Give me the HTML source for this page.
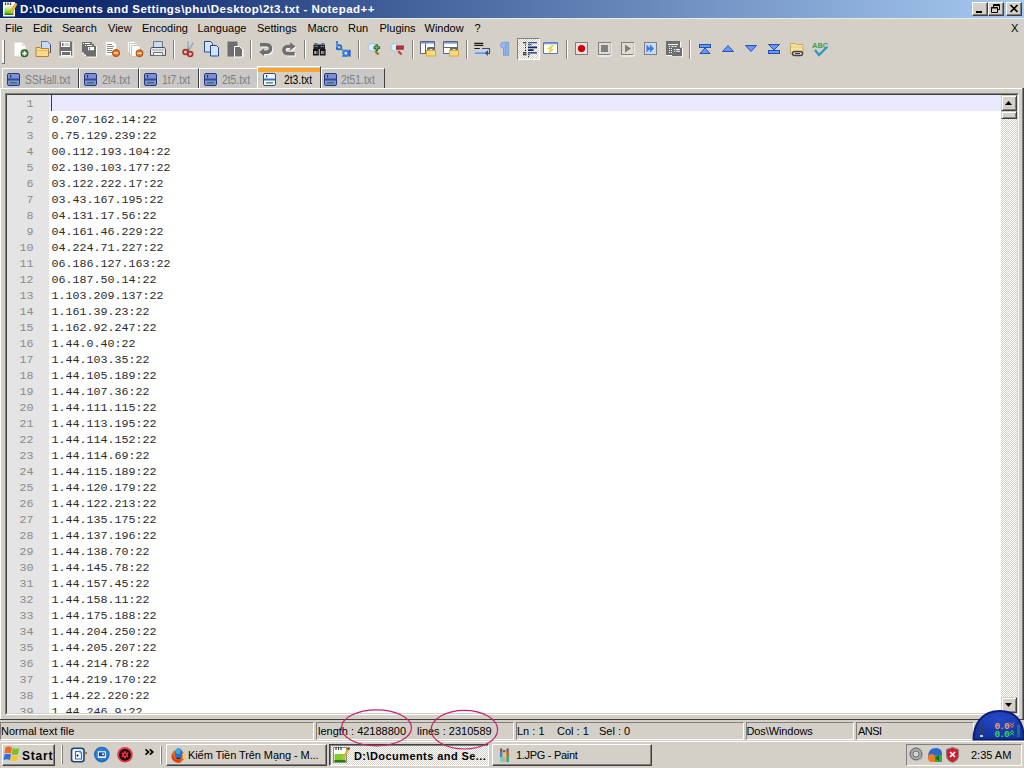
<!DOCTYPE html>
<html><head><meta charset="utf-8">
<style>
*{box-sizing:border-box;margin:0;padding:0}
html,body{width:1024px;height:768px;overflow:hidden;background:#D4D0C8;font-family:"Liberation Sans",sans-serif;font-size:11px;color:#000}
.a{position:absolute}
svg{position:absolute;overflow:visible}
#title{left:0;top:0;width:1024px;height:18px;background:linear-gradient(to right,#0A246A 0%,#0A246A 5%,#A6CAF0 100%)}
#title .t{left:20px;top:2px;color:#fff;font-weight:bold;font-size:11.5px;letter-spacing:0.44px;line-height:14px;white-space:nowrap}
.wb{top:2px;width:16px;height:14px;background:#D4D0C8;border-top:1px solid #fff;border-left:1px solid #fff;border-right:1px solid #404040;border-bottom:1px solid #404040;box-shadow:inset -1px -1px 0 #808080}
#menu{left:0;top:18px;width:1024px;height:20px}
#menu span{position:absolute;top:4px;line-height:13px;white-space:nowrap}
#tb{left:0;top:38px;width:1024px;height:28px}
.sep{position:absolute;top:40px;width:2px;height:19px;border-left:1px solid #808080;border-right:1px solid #fff}
#tabs{left:0;top:66px;width:1024px;height:26px}
.tab{position:absolute;top:68px;height:20px;background:#C9C8C6;border-top:1px solid #fff;border-left:1px solid #fff;border-right:1px solid #404040;color:#808080;white-space:nowrap}
.tab .tt{position:absolute;left:22px;top:4px;line-height:14px;font-size:12px;transform:scaleX(0.86);transform-origin:0 0}
.mono{font-family:"Liberation Mono",monospace;font-size:11.67px;line-height:16px;white-space:pre}
#status span{position:absolute;top:6px;line-height:13px;white-space:nowrap}
.pn{position:absolute;top:3px;height:18px;border-top:1px solid #808080;border-left:1px solid #808080;border-right:1px solid #fff;border-bottom:1px solid #fff}
.tbtn{position:absolute;top:4px;height:22px;border-top:1px solid #fff;border-left:1px solid #fff;border-right:1px solid #404040;border-bottom:1px solid #404040;box-shadow:inset -1px -1px 0 #808080}
.tbtn span{position:absolute;top:4px;line-height:13px;white-space:nowrap}
</style></head><body>
<div id="title" class="a">
  <div class="t a">D:\Documents and Settings\phu\Desktop\2t3.txt - Notepad++</div>
  <div class="wb a" style="left:972px"></div>
  <div class="wb a" style="left:988px"></div>
  <div class="wb a" style="left:1006px"></div>
</div>
<svg style="left:976px;top:11px" width="6" height="2"><rect width="6" height="2" fill="#000"/></svg>
<svg style="left:991px;top:4px" width="9" height="9" viewBox="0 0 9 9"><path d="M2.5 0.5h6v5h-6z M2.5 1.5h6" stroke="#000" fill="none"/><path d="M0.5 3.5h6v5h-6z" fill="#D4D0C8" stroke="#000"/><path d="M0 4h7" stroke="#000" stroke-width="1"/></svg>
<svg style="left:1010px;top:5px" width="8" height="7" viewBox="0 0 8 7"><path d="M0.5 0l7 7M7.5 0l-7 7" stroke="#000" stroke-width="1.6"/></svg>
<div class="a" style="left:0;top:18px;width:1024px;height:1px;background:#E8ECEC"></div>
<div id="menu" class="a">
  <span style="left:5px">File</span>
  <span style="left:33px">Edit</span>
  <span style="left:62px">Search</span>
  <span style="left:108px">View</span>
  <span style="left:142px">Encoding</span>
  <span style="left:197.5px">Language</span>
  <span style="left:257px">Settings</span>
  <span style="left:307.5px">Macro</span>
  <span style="left:348px">Run</span>
  <span style="left:379.5px">Plugins</span>
  <span style="left:424.5px">Window</span>
  <span style="left:474.5px">?</span>
  <span style="left:1011px">X</span>
</div>
<div id="tb" class="a">
  <div class="a" style="left:2px;top:2px;width:3px;height:24px;background:#F8F8F4;border-right:1px solid #707070;border-bottom:1px solid #707070"></div>
</div>
<svg style="left:13px;top:41px" width="16" height="16" viewBox="0 0 16 16">
<path d="M1.5 1.5h8l3 3v10.5h-11z" fill="#fff" stroke="#E8E4E0"/>
<path d="M9.5 1.5v3h3" fill="#F0F0F0" stroke="#D8D4D0"/>
<circle cx="11.5" cy="12.3" r="3.4" fill="#4A9A40" stroke="#2A5A28" stroke-width="1.1"/>
<path d="M11.5 10.2v4.3M9.4 12.5h4.3" stroke="#fff" stroke-width="1.3"/>
</svg><svg style="left:36px;top:41px" width="16" height="16" viewBox="0 0 16 16">
<path d="M5.5 0.5h6l3 3v8h-9z" fill="#C8DCF8" stroke="#5A78A8"/>
<path d="M14.5 3.5v8" stroke="#34507E"/>
<path d="M0 6.5h4l1 1h7.5v8h-12.5z" fill="#F8DA88" stroke="#B88038"/>
<path d="M1 9.5h11" stroke="#E8B860"/>
</svg><svg style="left:58px;top:41px" width="16" height="16" viewBox="0 0 16 16">
<path d="M1.5 0.5h13v14h-13z" fill="#6E6E6E"/>
<rect x="3" y="1" width="9" height="5" fill="#fff"/>
<rect x="4" y="2" width="1.5" height="3" fill="#6E6E6E"/>
<rect x="6.5" y="2" width="5" height="3" fill="#D0D0D0"/>
<rect x="3" y="10" width="10" height="5" fill="#fff"/>
<rect x="4" y="11" width="8" height="3" fill="#6E6E6E"/>
<path d="M15 1v15h-14" stroke="#fff" fill="none"/>
</svg><svg style="left:81px;top:41px" width="16" height="16" viewBox="0 0 16 16">
<path d="M15.5 5v11h-10M1.5 11.5v1h2v2h2" stroke="#fff" fill="none"/>
<path d="M1 1h10v2h2v2h2v10.5h-10v-2h-2v-2h-2z" fill="#6E6E6E"/>
<path d="M2 2.5h1M4 2.5h5M4 4.5h1M6 4.5h5" stroke="#fff"/>
<rect x="7" y="6" width="6" height="3.2" fill="#fff"/><rect x="8" y="6.6" width="1.2" height="2" fill="#6E6E6E"/>
</svg><svg style="left:104px;top:41px" width="16" height="16" viewBox="0 0 16 16">
<path d="M1.5 0.5h8l3 3v11h-11z" fill="#fff" stroke="#D8D4D0"/>
<path d="M3 3.5h5M3 5.5h7M3 7.5h6M3 9.5h5M3 11.5h5" stroke="#8A8A8A" stroke-width="1"/>
<circle cx="12" cy="12" r="3.6" fill="#E07020" stroke="#B05010"/>
<path d="M9.8 12h4.4" stroke="#FFE8A0" stroke-width="1.6"/>
</svg><svg style="left:127px;top:41px" width="16" height="16" viewBox="0 0 16 16">
<path d="M0.5 0.5h7l2 2v9h-9z" fill="#fff" stroke="#D8D4D0"/>
<path d="M2.5 2.5h7l2 2v9h-9z" fill="#fff" stroke="#C8C4C0"/>
<path d="M4.5 4.5h7l2 2v9h-9z" fill="#fff" stroke="#C8C4C0"/>
<circle cx="12.5" cy="12.3" r="3.5" fill="#E07020" stroke="#B05010"/>
<path d="M10.4 12.3h4.2" stroke="#FFE8A0" stroke-width="1.6"/>
</svg><svg style="left:150px;top:41px" width="16" height="16" viewBox="0 0 16 16">
<path d="M3.5 0.5h9v6h-9z" fill="#C8DCF8" stroke="#707880"/>
<path d="M1.5 6.5h13l1 2v6h-15v-6z" fill="#E8E8E8" stroke="#505458"/>
<path d="M2 9h12" stroke="#A0A4A8"/>
<path d="M3.5 11.5h9v3h-9z" fill="#F4F4F4" stroke="#707478"/>
</svg><svg style="left:181px;top:41px" width="16" height="16" viewBox="0 0 16 16">
<path d="M7 0.5v9" stroke="#9AA8B8" stroke-width="1.5"/>
<path d="M12.5 1.5l-5 8" stroke="#9AA8B8" stroke-width="1.5"/>
<path d="M7 7.5l1 3" stroke="#3A8A5A" stroke-width="1"/>
<circle cx="4.5" cy="11" r="2.4" fill="none" stroke="#B03030" stroke-width="1.8"/>
<circle cx="9.2" cy="13" r="2.4" fill="none" stroke="#B03030" stroke-width="1.8"/>
</svg><svg style="left:204px;top:41px" width="16" height="16" viewBox="0 0 16 16">
<path d="M0.5 0.5h6l2 2v8.5h-8z" fill="#D0E4FC" stroke="#2E4A80"/>
<path d="M6.5 4.5h6l2 2v8.5h-8z" fill="#D0E4FC" stroke="#2E4A80"/>
</svg><svg style="left:227px;top:41px" width="16" height="16" viewBox="0 0 16 16">
<path d="M0.5 0.5h10v15h-10z" fill="#6E6E6E"/>
<path d="M7.5 5.5h5l3 3v7.5h-8z" fill="#6E6E6E" stroke="#fff"/>
<path d="M16 8v8" stroke="#fff"/>
</svg><svg style="left:258px;top:41px" width="16" height="16" viewBox="0 0 16 16"><g transform="translate(1,1)"><path d="M2 3.7H8.8A3.8 3.8 0 0 1 8.8 11.3H5.5" stroke-width="3.4" fill="none" stroke="#fff"/><path d="M6.2 7.3L1.2 11.3L6.2 15.3z" fill="#fff"/></g><path d="M2 3.7H8.8A3.8 3.8 0 0 1 8.8 11.3H5.5" stroke-width="3.4" fill="none" stroke="#6E6E6E"/><path d="M6.2 7.3L1.2 11.3L6.2 15.3z" fill="#6E6E6E"/></svg><svg style="left:281px;top:41px" width="16" height="16" viewBox="0 0 16 16"><g transform="translate(1,1)"><path d="M9.5 5.4H6.6A3.7 3.7 0 0 0 6.6 12.8H13.7" stroke-width="3.4" fill="none" stroke="#fff"/><path d="M9.2 1.3L14.5 5.4L9.2 9.5z" fill="#fff"/></g><path d="M9.5 5.4H6.6A3.7 3.7 0 0 0 6.6 12.8H13.7" stroke-width="3.4" fill="none" stroke="#6E6E6E"/><path d="M9.2 1.3L14.5 5.4L9.2 9.5z" fill="#6E6E6E"/></svg><svg style="left:312px;top:41px" width="16" height="16" viewBox="0 0 16 16">
<path d="M1 8h5.8v6.5h-5.8z M7.8 8h5.8v6.5h-5.8z" fill="#151515"/>
<path d="M1.5 3.5h11.5v4.5h-11.5z" fill="#202028"/>
<path d="M2.5 2.5h3M9.3 2.5h3" stroke="#5A6A8A" stroke-width="1"/>
<path d="M2.5 5.5h3.5M8.5 5.5h3.5" stroke="#6A7A9A" stroke-width="1"/>
<rect x="2.3" y="10" width="1.6" height="3" fill="#B8B8B8"/><rect x="4.4" y="10" width="1.2" height="3" fill="#888"/>
<rect x="9.1" y="10" width="1.6" height="3" fill="#B8B8B8"/><rect x="11.2" y="10" width="1.2" height="3" fill="#888"/>
</svg><svg style="left:335px;top:41px" width="16" height="16" viewBox="0 0 16 16">
<path d="M2 0.3v8.5" stroke="#2A64C8" stroke-width="2"/>
<circle cx="4.3" cy="6.3" r="2.1" fill="none" stroke="#2A64C8" stroke-width="1.7"/>
<path d="M2 1.5v5" stroke="#90D4FA" stroke-width="0.8"/>
<path d="M6 7.5l2.5 2.5" stroke="#30A050" stroke-width="1.7"/>
<circle cx="11" cy="12.2" r="3.7" fill="#3C7CE4"/>
<path d="M14.6 8.8v6.8" stroke="#2A5CC0" stroke-width="2"/>
<circle cx="10.8" cy="12.2" r="1.4" fill="#C0E4FF"/>
<path d="M7.5 15.5l1.5 -1" stroke="#2A5CC0" stroke-width="1.5"/>
</svg><svg style="left:366px;top:41px" width="16" height="16" viewBox="0 0 16 16">
<circle cx="5.8" cy="6.2" r="3.8" fill="#DCEEFC" stroke="#A8C8E8" stroke-width="1.2"/>
<path d="M9.3 10.3l3.2 3.2" stroke="#8A7430" stroke-width="2.2"/>
<path d="M10.8 3.3v6.6M7.5 6.6h6.6" stroke="#2A6A2A" stroke-width="2.6"/>
<path d="M10.8 4.5v4.2M8.7 6.6h4.2" stroke="#6AC060" stroke-width="1"/>
</svg><svg style="left:389px;top:41px" width="16" height="16" viewBox="0 0 16 16">
<circle cx="5.8" cy="6.2" r="3.8" fill="#DCEEFC" stroke="#A8C8E8" stroke-width="1.2"/>
<path d="M9.3 10.3l3.2 3.2" stroke="#A84840" stroke-width="2.2"/>
<rect x="7.5" y="5" width="6.8" height="3.2" fill="#D03040" stroke="#8A1A20" stroke-width="0.8"/>
</svg><svg style="left:420px;top:41px" width="16" height="16" viewBox="0 0 16 16">
<path d="M0.5 0.5h14v12h-14z" fill="#fff" stroke="#56648A"/>
<path d="M1 1.8h13" stroke="#7A94CC" stroke-width="1.6"/>
<path d="M5.5 2.5v10" stroke="#56648A"/>
<path d="M7 10V7.5a1.5 1.5 0 0 1 1.5 -1.5h5a1.5 1.5 0 0 1 1.5 1.5V10z" fill="#686868"/>
<path d="M9 10a2 2 0 0 1 4 0z" fill="#fff"/>
<rect x="6.5" y="9.5" width="9" height="5.5" fill="#F8DC78" stroke="#D8A838"/>
</svg><svg style="left:443px;top:41px" width="16" height="16" viewBox="0 0 16 16">
<path d="M0.5 0.5h14v12h-14z" fill="#fff" stroke="#56648A"/>
<path d="M1 1.8h13" stroke="#7A94CC" stroke-width="1.6"/>
<path d="M1 6.5h13" stroke="#56648A"/>
<path d="M7 10V7.5a1.5 1.5 0 0 1 1.5 -1.5h5a1.5 1.5 0 0 1 1.5 1.5V10z" fill="#686868"/>
<path d="M9 10a2 2 0 0 1 4 0z" fill="#fff"/>
<rect x="6.5" y="9.5" width="9" height="5.5" fill="#F8DC78" stroke="#D8A838"/>
</svg><svg style="left:474px;top:41px" width="16" height="16" viewBox="0 0 16 16">
<path d="M0.3 2.3h9M0.3 4.4h9M0.3 7.5h5.5" stroke="#1A1A1A" stroke-width="1.2"/>
<rect x="0.3" y="10" width="13" height="4.2" fill="#BCD4F4"/>
<path d="M1 12.1h11" stroke="#5E8CD0" stroke-width="1.4"/>
<path d="M8 7.5h7.5v5h-3" stroke="#34507E" fill="none" stroke-width="1.1"/>
<path d="M14 9.3l-3.2 2.8l3.2 2.8z" fill="#34507E"/>
</svg><svg style="left:497px;top:41px" width="16" height="16" viewBox="0 0 16 16">
<path d="M6.5 1.3h5.2v13.2h-1.9v-11.4h-1.4v11.4h-1.9v-7.3a2.9 2.9 0 0 1 0 -5.9z" fill="#94BCF2" stroke="#6A94DC" stroke-width="0.8"/>
</svg><div class="a" style="left:517px;top:38px;width:23px;height:22px;border-top:1px solid #808080;border-left:1px solid #808080;border-right:1px solid #fff;border-bottom:1px solid #fff;background-color:#fff;background-image:conic-gradient(#D4D0C8 25%,transparent 0 50%,#D4D0C8 0 75%,transparent 0);background-size:2px 2px"></div><svg style="left:523px;top:42px" width="16" height="16" viewBox="0 0 16 16">
<path d="M0 0.8h3.5M0 10.9h3.5M0 12.8h3.5" stroke="#101010" stroke-width="1.1"/>
<path d="M2.5 2.5v1.2M2.5 5v1.2M2.5 7.8v1.2" stroke="#101010"/>
<path d="M5 0.8h9M5 2.8h3.6M5 10.9h9M5 12.8h1.6" stroke="#102468" stroke-width="1.1"/>
<path d="M5 5.4h9M5 8.2h5.6" stroke="#102468" stroke-width="1.8"/>
<path d="M5.5 14v1.2" stroke="#101010"/>
</svg><svg style="left:543px;top:41px" width="16" height="16" viewBox="0 0 16 16">
<path d="M0.5 1.5h14v11h-14z" fill="#FFFFF0" stroke="#5A78B8"/>
<path d="M1 2.5h13" stroke="#7A9AD8" stroke-width="1.6"/>
<path d="M9 4l-5 4h3l-2 5l6 -5h-3l3 -4z" fill="#F0D040"/>
</svg><svg style="left:573px;top:41px" width="16" height="16" viewBox="0 0 16 16">
<rect x="2.5" y="1.5" width="12" height="12" fill="#E8E0E0" stroke="#808080"/>
<circle cx="8.5" cy="7.5" r="3.6" fill="#D00000"/>
</svg><svg style="left:596px;top:41px" width="16" height="16" viewBox="0 0 16 16">
<rect x="2.5" y="1.5" width="12" height="12" fill="#E0DCD4" stroke="#808080"/>
<path d="M15 2v13h-13" stroke="#fff" fill="none"/>
<rect x="5" y="4" width="7" height="7" fill="#808080"/>
</svg><svg style="left:619px;top:41px" width="16" height="16" viewBox="0 0 16 16">
<rect x="2.5" y="1.5" width="12" height="12" fill="#E0DCD4" stroke="#808080"/>
<path d="M15 2v13h-13" stroke="#fff" fill="none"/>
<path d="M6 3.5l6 4l-6 4z" fill="#808080"/>
</svg><svg style="left:642px;top:41px" width="16" height="16" viewBox="0 0 16 16">
<rect x="2.5" y="1.5" width="12" height="12" fill="#C8DCF4" stroke="#808080"/>
<path d="M4.5 3.5l4 4l-4 4z M8 3.5l4 4l-4 4z" fill="#3A78E0"/>
</svg><svg style="left:665px;top:41px" width="16" height="16" viewBox="0 0 16 16">
<path d="M15.5 1v6M17.5 7v9.5M7 15.5h11M1.5 14.5h6" stroke="#fff" stroke-opacity="0.9"/>
<rect x="1" y="0" width="14" height="14" fill="#6E6E6E"/>
<path d="M3 3.5h10" stroke="#fff"/>
<path d="M4 5.5h1M6.5 5.5h2M9.5 5.5h2M4 7.5h1M6 7.5h1M4 9.5h1M6 9.5h1M4 11.5h1M6 11.5h1" stroke="#fff"/>
<rect x="7" y="6.7" width="10" height="8.5" fill="#6E6E6E"/>
<path d="M9 8.5h1.2M11.2 8.5h3.5M9 10.2h1.2M11.2 10.2h3.8" stroke="#fff" stroke-width="1.1"/>
</svg><svg style="left:697px;top:41px" width="16" height="16" viewBox="0 0 16 16">
<rect x="2.5" y="3.5" width="11" height="3" fill="#6A9AF0" stroke="#2050B8"/>
<path d="M8 7l5 5.5h-10z" fill="#6A9AF0" stroke="#2050B8"/>
</svg><svg style="left:720px;top:41px" width="16" height="16" viewBox="0 0 16 16">
<path d="M8 4.5l5.5 6h-11z" fill="#6A9AF0" stroke="#2050B8"/>
</svg><svg style="left:743px;top:41px" width="16" height="16" viewBox="0 0 16 16">
<path d="M2.5 4.5h11l-5.5 6z" fill="#6A9AF0" stroke="#2050B8"/>
</svg><svg style="left:766px;top:41px" width="16" height="16" viewBox="0 0 16 16">
<path d="M2.5 3.5h11l-5.5 5.5z" fill="#6A9AF0" stroke="#2050B8"/>
<rect x="2.5" y="9.5" width="11" height="3" fill="#6A9AF0" stroke="#2050B8"/>
</svg><svg style="left:789px;top:41px" width="16" height="16" viewBox="0 0 16 16">
<path d="M1.5 2.5h5l1 1h6.5v9h-12.5z" fill="#F8E4A0" stroke="#C8A860"/>
<path d="M2 6h12" stroke="#E8C878"/>
<rect x="3.5" y="10.5" width="10" height="4" rx="2" fill="#E0E0E0" stroke="#404040" stroke-width="1.4"/>
<path d="M6 12.5h5" stroke="#404040" stroke-width="1.2"/>
</svg><svg style="left:812px;top:41px" width="16" height="16" viewBox="0 0 16 16">
<text x="0" y="6.5" font-family="Liberation Sans" font-weight="bold" font-size="7.5" fill="#4A9A4A">ABC</text>
<path d="M3 9l4 5l8 -8" stroke="#2A98B8" stroke-width="2.2" fill="none"/>
</svg><div class="sep" style="left:173px"></div><div class="sep" style="left:250px"></div><div class="sep" style="left:304px"></div><div class="sep" style="left:358px"></div><div class="sep" style="left:412px"></div><div class="sep" style="left:466px"></div><div class="sep" style="left:566px"></div><div class="sep" style="left:689px"></div>
<div id="tabs">
  <div class="tab" style="left:2px;width:77px"><span class="tt" style="left:22px">SSHall.txt</span></div>
  <div class="tab" style="left:79px;width:60px"><span class="tt" style="left:22px">2t4.txt</span></div>
  <div class="tab" style="left:139px;width:60px"><span class="tt" style="left:22px">1t7.txt</span></div>
  <div class="tab" style="left:199px;width:58px;border-right:0"><span class="tt" style="left:22px">2t5.txt</span></div>
  <div class="tab" style="left:257px;width:64px;top:66px;height:22px;background:#D4D0C8;color:#000"><div class="a" style="left:0;top:1px;width:62px;height:4px;background:#F6A631"></div><span class="tt" style="left:26px;top:6px">2t3.txt</span></div>
  <div class="tab" style="left:321px;width:64px"><span class="tt" style="left:19px">2t51.txt</span></div>
</div>
<svg style="left:7px;top:73px" width="13" height="13" viewBox="0 0 13 13"><rect x="0.5" y="0.5" width="12" height="12" rx="1.5" fill="#8090D0" stroke="#26347A"/>
<rect x="3" y="2" width="1.2" height="2.5" fill="#1E2A6A"/>
<rect x="1" y="5.5" width="11" height="2" fill="#2E4AA0"/>
<rect x="3" y="9" width="7" height="1.6" fill="#3A7A6A"/></svg><svg style="left:84px;top:73px" width="13" height="13" viewBox="0 0 13 13"><rect x="0.5" y="0.5" width="12" height="12" rx="1.5" fill="#8090D0" stroke="#26347A"/>
<rect x="3" y="2" width="1.2" height="2.5" fill="#1E2A6A"/>
<rect x="1" y="5.5" width="11" height="2" fill="#2E4AA0"/>
<rect x="3" y="9" width="7" height="1.6" fill="#3A7A6A"/></svg><svg style="left:144px;top:73px" width="13" height="13" viewBox="0 0 13 13"><rect x="0.5" y="0.5" width="12" height="12" rx="1.5" fill="#8090D0" stroke="#26347A"/>
<rect x="3" y="2" width="1.2" height="2.5" fill="#1E2A6A"/>
<rect x="1" y="5.5" width="11" height="2" fill="#2E4AA0"/>
<rect x="3" y="9" width="7" height="1.6" fill="#3A7A6A"/></svg><svg style="left:204px;top:73px" width="13" height="13" viewBox="0 0 13 13"><rect x="0.5" y="0.5" width="12" height="12" rx="1.5" fill="#8090D0" stroke="#26347A"/>
<rect x="3" y="2" width="1.2" height="2.5" fill="#1E2A6A"/>
<rect x="1" y="5.5" width="11" height="2" fill="#2E4AA0"/>
<rect x="3" y="9" width="7" height="1.6" fill="#3A7A6A"/></svg><svg style="left:324px;top:73px" width="13" height="13" viewBox="0 0 13 13"><rect x="0.5" y="0.5" width="12" height="12" rx="1.5" fill="#8090D0" stroke="#26347A"/>
<rect x="3" y="2" width="1.2" height="2.5" fill="#1E2A6A"/>
<rect x="1" y="5.5" width="11" height="2" fill="#2E4AA0"/>
<rect x="3" y="9" width="7" height="1.6" fill="#3A7A6A"/></svg><svg style="left:263px;top:73px" width="13" height="13" viewBox="0 0 13 13"><rect x="0.5" y="0.5" width="12" height="12" rx="1.5" fill="#F4F8FF" stroke="#38477A"/>
<rect x="3" y="2" width="1.2" height="2.5" fill="#2A3A6A"/>
<rect x="1" y="5.5" width="11" height="2" fill="#3E6CC0"/>
<rect x="3" y="9" width="7" height="1.6" fill="#5AA05A"/></svg><svg style="left:2px;top:1px" width="16" height="16" viewBox="0 0 16 16">
<defs><linearGradient id="ag" x1="0" y1="0" x2="0" y2="1"><stop offset="0" stop-color="#F0F8E0"/><stop offset="0.45" stop-color="#A8E848"/><stop offset="0.8" stop-color="#60B820"/><stop offset="1" stop-color="#185A08"/></linearGradient></defs>
<rect x="1" y="1" width="12" height="14.5" fill="#fff"/>
<rect x="2.5" y="5" width="9" height="9" fill="url(#ag)"/>
<path d="M3.5 1.5v2.5M6 1.5v2.5M8.5 1.5v2.5" stroke="#383838" stroke-width="1.3"/>
<path d="M14.3 2.5l-5.5 9.5" stroke="#C89020" stroke-width="2.8"/>
<path d="M14.3 2.5l-5.5 9.5" stroke="#F8D060" stroke-width="1.2"/>
</svg>
<div class="a" style="left:0;top:88px;width:1022px;height:1px;background:#fff"></div><div class="a" style="left:0;top:88px;width:1px;height:631px;background:#fff"></div>
<!-- editor frame -->
<div class="a" style="left:5px;top:93px;width:1014px;height:622px;border-top:1px solid #808080;border-left:1px solid #808080;border-right:1px solid #fff;border-bottom:1px solid #fff">
 <div class="a" style="left:0;top:0;width:1012px;height:620px;border-top:1px solid #404040;border-left:1px solid #404040;border-right:1px solid #D4D0C8;border-bottom:1px solid #D4D0C8;background:#fff;overflow:hidden">
  <div class="a" style="left:0;top:0;width:42px;height:618px;background:#E4E4E4"></div>
  <div class="a" style="left:42px;top:0;width:952px;height:16px;background:#E8E8FF"></div>
  <div class="a mono" style="left:0;top:1px;width:26.5px;text-align:right;color:#8a8a8a">1
2
3
4
5
6
7
8
9
10
11
12
13
14
15
16
17
18
19
20
21
22
23
24
25
26
27
28
29
30
31
32
33
34
35
36
37
38
39</div>
  <div class="a mono" style="left:44.5px;top:1px;color:#2a2a2a">
0.207.162.14:22
0.75.129.239:22
00.112.193.104:22
02.130.103.177:22
03.122.222.17:22
03.43.167.195:22
04.131.17.56:22
04.161.46.229:22
04.224.71.227:22
06.186.127.163:22
06.187.50.14:22
1.103.209.137:22
1.161.39.23:22
1.162.92.247:22
1.44.0.40:22
1.44.103.35:22
1.44.105.189:22
1.44.107.36:22
1.44.111.115:22
1.44.113.195:22
1.44.114.152:22
1.44.114.69:22
1.44.115.189:22
1.44.120.179:22
1.44.122.213:22
1.44.135.175:22
1.44.137.196:22
1.44.138.70:22
1.44.145.78:22
1.44.157.45:22
1.44.158.11:22
1.44.175.188:22
1.44.204.250:22
1.44.205.207:22
1.44.214.78:22
1.44.219.170:22
1.44.22.220:22
1.44.246.9:22</div>
  <div class="a" style="left:44px;top:0;width:1px;height:16px;background:#5020A0"></div>
  <!-- scrollbar -->
  <div class="a" style="left:994px;top:0;width:16px;height:618px;background-color:#fff;background-image:conic-gradient(#D4D0C8 25%,transparent 0 50%,#D4D0C8 0 75%,transparent 0);background-size:2px 2px"></div>
  <div class="a" style="left:994px;top:0;width:16px;height:16px;background:#D4D0C8;border-top:1px solid #D4D0C8;border-left:1px solid #D4D0C8;border-right:1px solid #404040;border-bottom:1px solid #404040;box-shadow:inset 1px 1px 0 #fff,inset -1px -1px 0 #808080"></div>
  <div class="a" style="left:994px;top:16px;width:16px;height:8px;background:#D4D0C8;border-top:1px solid #D4D0C8;border-left:1px solid #D4D0C8;border-right:1px solid #404040;border-bottom:1px solid #404040;box-shadow:inset 1px 1px 0 #fff,inset -1px -1px 0 #808080"></div>
  <div class="a" style="left:994px;top:602px;width:16px;height:16px;background:#D4D0C8;border-top:1px solid #D4D0C8;border-left:1px solid #D4D0C8;border-right:1px solid #404040;border-bottom:1px solid #404040;box-shadow:inset 1px 1px 0 #fff,inset -1px -1px 0 #808080"></div>
 </div>
</div>
<div class="a" style="left:1022px;top:88px;width:2px;height:632px;border-left:1px solid #808080;border-right:1px solid #404040"></div>
<div class="a" style="left:0;top:719px;width:1024px;height:1px;background:#404040"></div>
<div id="status" class="a" style="left:0;top:719px;width:1024px;height:21px">
  <div class="pn" style="left:0;width:314px"></div>
  <div class="pn" style="left:316px;width:198px"></div>
  <div class="pn" style="left:516px;width:228px"></div>
  <div class="pn" style="left:746px;width:108px"></div>
  <div class="pn" style="left:856px;width:118px"></div>
  <span style="left:1px">Normal text file</span>
  <span style="left:318px">length : 42188800</span>
  <span style="left:417px">lines : 2310589</span>
  <span style="left:517px">Ln : 1</span><span style="left:557px">Col : 1</span><span style="left:599px">Sel : 0</span>
  <span style="left:746.5px;letter-spacing:-0.1px">Dos\Windows</span>
  <span style="left:858px;letter-spacing:-0.5px">ANSI</span>
</div>
<div id="taskbar" class="a" style="left:0;top:740px;width:1024px;height:28px;border-top:1px solid #D4D0C8">
  <div class="a" style="left:0;top:0;width:1024px;height:1px;background:#fff"></div>
  <div class="tbtn" style="left:2px;top:3px;width:53px"><span style="left:19px;font-weight:bold;font-size:12px;letter-spacing:0.8px;top:5px">Start</span></div>
  <div class="a" style="left:61px;top:4px;width:2px;height:19px;border-left:1px solid #fff;border-right:1px solid #808080"></div>
  <div class="a" style="left:160px;top:5px;width:2px;height:18px;border-left:1px solid #fff;border-right:1px solid #808080"></div>
  <svg style="left:145px;top:8px" width="9" height="6" viewBox="0 0 9 6"><path d="M0.5 0.3l3 2.7l-3 2.7M4.8 0.3l3 2.7l-3 2.7" stroke="#000" stroke-width="1.7" fill="none"/></svg>
  <div class="tbtn" style="left:166px;top:3px;width:161px"><span style="left:21px;letter-spacing:-0.08px">Kiếm Tiền Trên Mạng - M...</span></div>
  <div class="tbtn" style="left:329px;top:3px;width:160px;background-color:#fff;background-image:conic-gradient(#D4D0C8 25%,transparent 0 50%,#D4D0C8 0 75%,transparent 0);background-size:2px 2px;border-top:1px solid #404040;border-left:1px solid #404040;border-right:1px solid #fff;border-bottom:1px solid #fff;box-shadow:inset 1px 1px 0 #808080"><span style="left:24px;top:5px;font-weight:bold;letter-spacing:0.43px">D:\Documents and Se...</span></div>
  <div class="tbtn" style="left:492px;top:3px;width:160px"><span style="left:23px;letter-spacing:-0.3px">1.JPG - Paint</span></div>
  <div class="a" style="left:906px;top:3px;width:116px;height:22px;border-top:1px solid #808080;border-left:1px solid #808080;border-right:1px solid #fff;border-bottom:1px solid #fff"></div>
  <span class="a" style="left:971px;top:8px;line-height:13px">2:35 AM</span>
</div>
<svg style="left:4px;top:745px" width="16" height="16" viewBox="0 0 16 16">
<path d="M1.5 2.5q3 -2 6.5 0l-1 6q-3 -1.5 -6.5 0z" fill="#F06A20"/>
<path d="M8.8 3q3 1.5 6.5 0l-1.2 6.2q-3 1.5 -6.5 0z" fill="#7CC030"/>
<path d="M0.5 9.5q3 -1.5 6.5 0l-1 5.5q-3 -1.5 -6.5 0z" fill="#3070D8"/>
<path d="M7.6 10.2q3 1.5 6.5 0l-1 5.3q-3 1.5 -6.5 0z" fill="#F8C820"/>
</svg><svg style="left:70px;top:747px" width="16" height="16" viewBox="0 0 16 16">
<rect x="1.5" y="1.2" width="12.5" height="13.5" rx="2.5" fill="#E4F2FF" stroke="#24446E" stroke-width="1.6"/>
<path d="M4 3.5v9h5" stroke="#fff" stroke-width="1.5" fill="none"/>
<path d="M5.5 4.5h4l2 2v5.5h-6z" fill="#F4FAFF" stroke="#3A6AB0" stroke-width="1.1"/>
<path d="M9.5 3.5l2.5 3" stroke="#5A9AE0" stroke-width="1.4"/>
<circle cx="7.5" cy="8.5" r="0.9" fill="#000"/>
<circle cx="16" cy="6" r="1.2" fill="#C07030"/>
</svg><svg style="left:94px;top:747px" width="16" height="16" viewBox="0 0 16 16">
<circle cx="7.8" cy="7.6" r="7.8" fill="#1E64BC"/>
<circle cx="7.8" cy="7.2" r="6.6" fill="#2C7ED6"/>
<rect x="3.8" y="4.3" width="8" height="6.6" fill="#fff"/>
<rect x="4.8" y="5.3" width="6" height="4" fill="#1E4C9A"/>
<rect x="8" y="6.5" width="2" height="1.4" fill="#fff"/>
</svg><svg style="left:117px;top:747px" width="16" height="16" viewBox="0 0 16 16">
<circle cx="8" cy="7.8" r="7.8" fill="#E83848"/>
<circle cx="8" cy="7.8" r="5.9" fill="#120808"/>
<path d="M8 4v7.6M4.7 5.9l6.6 3.8M4.7 9.7l6.6 -3.8" stroke="#E83040" stroke-width="1.8"/>
<circle cx="8" cy="7.8" r="2.6" fill="#E83040"/>
<circle cx="8" cy="7.8" r="1" fill="#120808"/>
</svg><svg style="left:170px;top:747px" width="16" height="16" viewBox="0 0 16 16">
<circle cx="8" cy="9.2" r="6.6" fill="#E8601E"/>
<ellipse cx="8.7" cy="6.6" rx="3.8" ry="5.4" fill="#2A6ED0"/>
<ellipse cx="8.2" cy="4.2" rx="2.4" ry="3" fill="#3AAAE0"/>
<path d="M6.5 11.5h4" stroke="#3A2010" stroke-width="1.2"/>
<path d="M12.8 6.5q1.8 2.5 0.6 5.5" stroke="#F2D850" stroke-width="2" fill="none"/>
<path d="M2.5 9.5q1.5 5.5 8 5" stroke="#E0381A" stroke-width="2.2" fill="none"/>
<path d="M3 6.5q1 -2.5 3 -3" stroke="#C88050" stroke-width="1.2" fill="none"/>
</svg><svg style="left:333px;top:747px" width="16" height="16" viewBox="0 0 16 16">
<rect x="0.5" y="0.5" width="13" height="15" fill="#fff" stroke="#909090"/>
<path d="M3 0v3M5.5 0v3M8 0v3" stroke="#404040" stroke-width="1.2"/>
<rect x="1.5" y="7" width="11" height="8" fill="#7CD030"/>
<rect x="1.5" y="13" width="11" height="2" fill="#2A7A10"/>
<path d="M15.5 2l-6 10" stroke="#E0B030" stroke-width="2.4"/>
<circle cx="15.5" cy="1.5" r="1.2" fill="#802020"/>
</svg><svg style="left:497px;top:747px" width="16" height="16" viewBox="0 0 16 16">
<path d="M2.5 6h11l-1.5 10h-8z" fill="#A8D8C8" opacity="0.8"/>
<path d="M4.2 1.5v3.5M7.2 3v2.5M10.6 1.5v3.5" stroke="#6A5A50" stroke-width="2.2"/>
<path d="M4.2 5v9" stroke="#4A80C0" stroke-width="2.4"/>
<path d="M7.2 5.5v4.5" stroke="#E8D030" stroke-width="2.4"/><path d="M7.2 10v5" stroke="#F0A080" stroke-width="2.4"/>
<path d="M10.6 5v4" stroke="#D84838" stroke-width="2.4"/><path d="M10.6 9v6" stroke="#40A070" stroke-width="2.4"/>
<path d="M4.2 10v5" stroke="#80D0B0" stroke-width="2.4"/>
</svg><svg style="left:909px;top:747px" width="16" height="16" viewBox="0 0 16 16">
<circle cx="7" cy="7" r="6" fill="#A8A8A8" stroke="#606060"/>
<circle cx="7" cy="7" r="3" fill="#D8D8D8" stroke="#707070"/>
<path d="M9 13q4 0 5 -3" stroke="#A0B0D0" fill="none"/>
</svg><svg style="left:927px;top:747px" width="16" height="16" viewBox="0 0 16 16">
<path d="M1 10q0 -9 8 -9q6 0 6 6v8h-7q-7 0 -7 -5z" fill="#2A68D0"/>
<path d="M1 11q0 -4 4 -4q3 0 3 4v4h-3q-4 0 -4 -4z" fill="#F07A20"/>
<path d="M8 8l7 0v7h-7z" fill="#30A840"/>
<path d="M8 11l4 -3v6z" fill="#1A6A20"/>
</svg><svg style="left:946px;top:747px" width="13" height="16" viewBox="0 0 13 16">
<path d="M6.5 0.5l6 2v6q0 5 -6 7q-6 -2 -6 -7v-6z" fill="#D02030" stroke="#808080"/>
<path d="M4 5l5 5M9 5l-5 5" stroke="#fff" stroke-width="1.6"/>
</svg><svg style="left:330px;top:706px" width="100" height="48" viewBox="0 0 100 48"><ellipse cx="46.5" cy="21.8" rx="35" ry="18" fill="none" stroke="#C82268" stroke-width="1.2"/></svg><svg style="left:420px;top:706px" width="100" height="48" viewBox="0 0 100 48"><ellipse cx="44.4" cy="23.7" rx="33.2" ry="19.3" fill="none" stroke="#C82268" stroke-width="1.2"/></svg><svg style="left:972px;top:709px" width="52" height="31" viewBox="0 0 52 31">
<defs><radialGradient id="dg" cx="0.5" cy="0.25" r="0.7"><stop offset="0" stop-color="#2448C4"/><stop offset="1" stop-color="#1434A0"/></radialGradient></defs>
<path d="M1.5 30.5C1.5 16 9 2 28 2C43 2 52 12 52 30.5Z" fill="url(#dg)" stroke="#0A1C78" stroke-width="2"/>
<rect x="8" y="15" width="3" height="13" fill="#283C78"/>
<rect x="8" y="26" width="3" height="2" fill="#C0C8D0"/>
<text x="22.5" y="19.5" font-family="Liberation Mono" font-weight="bold" font-size="9.5" fill="#F0A070" letter-spacing="-1">0.0</text>
<text x="22.5" y="28" font-family="Liberation Mono" font-weight="bold" font-size="9.5" fill="#38D850" letter-spacing="-1">0.0</text>
<path d="M38 13.5l2 2.5l2 -2.5M38 16l2 2.5l2 -2.5" stroke="#F08040" fill="none" stroke-width="1"/>
<path d="M38 24l2 -2.5l2 2.5M38 26.5l2 -2.5l2 2.5" stroke="#38D850" fill="none" stroke-width="1"/>
<path d="M45 17h3M45 19h3M45 21h3M45 23h3M45 25h3M45 27h3" stroke="#30B040" stroke-width="0.9"/>
</svg>
<svg style="left:1005px;top:101px" width="7" height="4" viewBox="0 0 7 4"><path d="M3.5 0L7 4H0z" fill="#000"/></svg>
<svg style="left:1005px;top:703px" width="7" height="4" viewBox="0 0 7 4"><path d="M0 0H7L3.5 4z" fill="#000"/></svg>
</body></html>
